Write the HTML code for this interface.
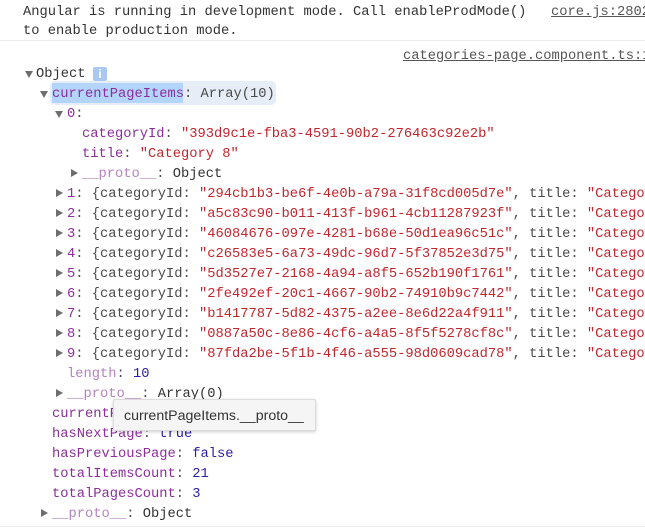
<!DOCTYPE html>
<html><head><meta charset="utf-8">
<style>
html,body{margin:0;padding:0;background:#fff;width:645px;height:530px;overflow:hidden}
.l{position:absolute;white-space:pre;font:13.76px/20px "Liberation Mono",monospace;color:#4a4a4a;height:20px;margin-top:2px;filter:blur(.3px)}
.p{color:#8b2f9b}.d{color:#b583c0}.s{color:#c0272d}.n{color:#2a1fa8}.g{color:#555}
.t{position:absolute;width:0;height:0}
.o{border-left:4px solid transparent;border-right:4px solid transparent;border-top:7px solid #6e6e6e;margin:1px 0 0 1px}
.c{border-top:4px solid transparent;border-bottom:4px solid transparent;border-left:7px solid #6e6e6e}
.k{color:#555;text-decoration:underline}
</style></head><body>
<div class="l" style="left:23px;top:1px;color:#333">Angular is running in development mode. Call enableProdMode()</div>
<div class="l k" style="left:551px;top:1px">core.js:28021</div>
<div class="l" style="left:23px;top:20px;color:#333">to enable production mode.</div>
<div style="position:absolute;left:0;top:40px;width:645px;height:1px;background:#eee"></div>
<div class="l k" style="left:403px;top:45px">categories-page.component.ts:15</div>

<div class="t o" style="left:24px;top:70px"></div>
<div class="l" style="left:36px;top:63px;color:#333">Object</div>
<div style="position:absolute;left:93px;top:67px;width:14px;height:14px;background:#a9c8f2;border-radius:2px;color:#fff;font:bold 12px/14px 'Liberation Sans',sans-serif;text-align:center">i</div>

<div style="position:absolute;left:50px;top:81px;width:226px;height:24px;background:#e6edf6;border-radius:5px"></div>
<div style="position:absolute;left:52px;top:83px;width:131px;height:20px;background:#b3d4fb"></div>
<div class="t o" style="left:39px;top:90px"></div>
<div class="l" style="left:52px;top:83px"><span class="p">currentPageItems</span>: Array(10)</div>

<div class="t o" style="left:54px;top:110px"></div>
<div class="l" style="left:67px;top:103px"><span class="p">0</span>:</div>
<div class="l" style="left:82px;top:123px"><span class="p">categoryId</span>: <span class="s">"393d9c1e-fba3-4591-90b2-276463c92e2b"</span></div>
<div class="l" style="left:82px;top:143px"><span class="p">title</span>: <span class="s">"Category 8"</span></div>
<div class="t c" style="left:71px;top:169px"></div>
<div class="l" style="left:82px;top:163px"><span class="d">__proto__</span>: <span style="color:#333">Object</span></div>

<div class="t c" style="left:56px;top:189px"></div>
<div class="l" style="left:67px;top:183px"><span class="p">1</span>: {categoryId: <span class="s">"294cb1b3-be6f-4e0b-a79a-31f8cd005d7e"</span>, title: <span class="s">"Category</span></div>
<div class="t c" style="left:56px;top:209px"></div>
<div class="l" style="left:67px;top:203px"><span class="p">2</span>: {categoryId: <span class="s">"a5c83c90-b011-413f-b961-4cb11287923f"</span>, title: <span class="s">"Category</span></div>
<div class="t c" style="left:56px;top:229px"></div>
<div class="l" style="left:67px;top:223px"><span class="p">3</span>: {categoryId: <span class="s">"46084676-097e-4281-b68e-50d1ea96c51c"</span>, title: <span class="s">"Category</span></div>
<div class="t c" style="left:56px;top:249px"></div>
<div class="l" style="left:67px;top:243px"><span class="p">4</span>: {categoryId: <span class="s">"c26583e5-6a73-49dc-96d7-5f37852e3d75"</span>, title: <span class="s">"Category</span></div>
<div class="t c" style="left:56px;top:269px"></div>
<div class="l" style="left:67px;top:263px"><span class="p">5</span>: {categoryId: <span class="s">"5d3527e7-2168-4a94-a8f5-652b190f1761"</span>, title: <span class="s">"Category</span></div>
<div class="t c" style="left:56px;top:289px"></div>
<div class="l" style="left:67px;top:283px"><span class="p">6</span>: {categoryId: <span class="s">"2fe492ef-20c1-4667-90b2-74910b9c7442"</span>, title: <span class="s">"Category</span></div>
<div class="t c" style="left:56px;top:309px"></div>
<div class="l" style="left:67px;top:303px"><span class="p">7</span>: {categoryId: <span class="s">"b1417787-5d82-4375-a2ee-8e6d22a4f911"</span>, title: <span class="s">"Category</span></div>
<div class="t c" style="left:56px;top:329px"></div>
<div class="l" style="left:67px;top:323px"><span class="p">8</span>: {categoryId: <span class="s">"0887a50c-8e86-4cf6-a4a5-8f5f5278cf8c"</span>, title: <span class="s">"Category</span></div>
<div class="t c" style="left:56px;top:349px"></div>
<div class="l" style="left:67px;top:343px"><span class="p">9</span>: {categoryId: <span class="s">"87fda2be-5f1b-4f46-a555-98d0609cad78"</span>, title: <span class="s">"Category</span></div>

<div class="l" style="left:67px;top:363px"><span class="d">length</span>: <span class="n">10</span></div>
<div class="t c" style="left:56px;top:389px"></div>
<div class="l" style="left:67px;top:383px"><span class="d">__proto__</span>: <span style="color:#333">Array(0)</span></div>
<div class="l" style="left:52px;top:403px"><span class="p">currentPage</span>: <span class="n">1</span></div>
<div class="l" style="left:52px;top:423px"><span class="p">hasNextPage</span>: <span class="n">true</span></div>
<div class="l" style="left:52px;top:443px"><span class="p">hasPreviousPage</span>: <span class="n">false</span></div>
<div class="l" style="left:52px;top:463px"><span class="p">totalItemsCount</span>: <span class="n">21</span></div>
<div class="l" style="left:52px;top:483px"><span class="p">totalPagesCount</span>: <span class="n">3</span></div>
<div class="t c" style="left:41px;top:509px"></div>
<div class="l" style="left:52px;top:503px"><span class="d">__proto__</span>: <span style="color:#333">Object</span></div>
<div style="position:absolute;left:0;top:526px;width:645px;height:1px;background:#eee"></div>

<div style="position:absolute;left:113px;top:399px;width:201px;height:30px;background:#f5f5f5;border:1px solid #dcdcdc;border-radius:2px;box-shadow:0 1px 3px rgba(0,0,0,.2);font:14.2px/33px 'Liberation Sans',sans-serif;color:#333;text-indent:10px;white-space:pre">currentPageItems.__proto__</div>
</body></html>
